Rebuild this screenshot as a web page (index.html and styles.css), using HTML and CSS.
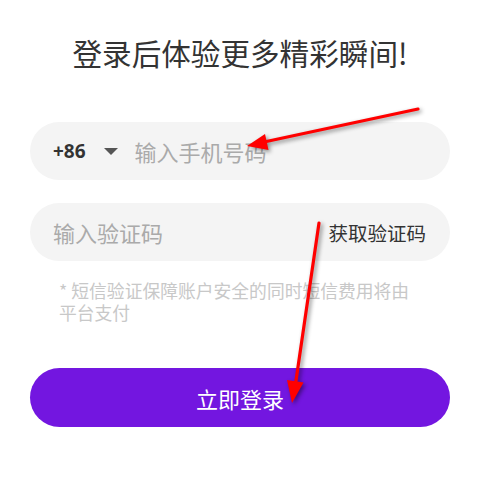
FILE: index.html
```html
<!DOCTYPE html>
<html lang="zh-CN">
<head>
  <meta charset="UTF-8" />
  <title>登录</title>
  <meta name="viewport" content="width=device-width, initial-scale=1.0" />
  <link rel="stylesheet" href="styles.css">
</head>
<body>

  <div class="login">
    <!-- Heading -->
    <h1 class="login-title">登录后体验更多精彩瞬间!</h1>

    <!-- Phone number -->
    <div class="field">
      <span class="area-code">+86</span>
      <span class="caret"></span>
      <input class="field-input" type="tel" placeholder="输入手机号码">
    </div>

    <!-- SMS code -->
    <div class="field field-code">
      <input class="field-input" type="text" placeholder="输入验证码">
      <span class="get-code">获取验证码</span>
    </div>

    <p class="note">* 短信验证保障账户安全的同时短信费用将由平台支付</p>

    <button class="submit">立即登录</button>
  </div>

  <!-- Annotation arrows drawn over the screenshot -->
  <svg class="arrows" width="480" height="485" viewBox="0 0 480 485">
    <line x1="418" y1="109" x2="264" y2="142" stroke="#f00" stroke-width="3.2" stroke-linecap="round" />
    <polygon points="247,146 268.5,150 265,134" fill="#f00" />
    <line x1="319" y1="223" x2="295.5" y2="384" stroke="#f00" stroke-width="3.2" stroke-linecap="round" />
    <polygon points="292,403 303.5,382.5 287,380" fill="#f00" />
  </svg>

</body>
</html>
```

FILE: styles.css
```css
/* Basic reset */
* {
  box-sizing: border-box;
  margin: 0;
  padding: 0;
}
body {
  font-family: "Noto Sans CJK SC", "Noto Sans", sans-serif;
  background: #fff;
  color: #333;
  position: relative;
  width: 480px;
  height: 485px;
  overflow: hidden;
}

/* Page wrapper */
.login {
  padding: 33px 30px 0 30px;
}

.login-title {
  font-size: 29.6px;
  line-height: 40px;
  font-weight: 400;
  text-align: center;
  color: #333;
  margin-bottom: 49px;
}

/* Rounded grey fields */
.field {
  display: flex;
  align-items: center;
  height: 58px;
  border-radius: 29px;
  background: #f4f4f4;
  padding: 0 24px 0 23px;
}
.field-code {
  margin-top: 23px;
}

.area-code {
  font-family: "Noto Sans", sans-serif;
  font-weight: 700;
  font-size: 19px;
  color: #333;
}
.caret {
  width: 0;
  height: 0;
  border-left: 7.5px solid transparent;
  border-right: 7.5px solid transparent;
  border-top: 7px solid #555;
  margin: 0 17px 0 18px;
}

.field-input {
  flex: 1;
  min-width: 0;
  border: none;
  outline: none;
  background: transparent;
  font-family: "Noto Sans CJK SC", sans-serif;
  font-size: 22px;
  color: #333;
}
.field-input::placeholder {
  color: #aaa;
}

.get-code {
  font-size: 19.5px;
  color: #333;
  white-space: nowrap;
}

/* Hint under the code field */
.note {
  margin-top: 18px;
  padding: 0 36px 0 29px;
  font-size: 17.8px;
  line-height: 22px;
  color: #c8c8c8;
}

/* Submit button */
.submit {
  display: block;
  width: 100%;
  height: 59px;
  margin-top: 45px;
  border: none;
  border-radius: 30px;
  background: #7316e0;
  color: #fff;
  font-family: "Noto Sans CJK SC", sans-serif;
  font-size: 22px;
  cursor: pointer;
}

/* Overlay arrows */
.arrows {
  position: absolute;
  top: 0;
  left: 0;
  pointer-events: none;
  filter: drop-shadow(2px 2px 2px rgba(0,0,0,0.45));
}
```
